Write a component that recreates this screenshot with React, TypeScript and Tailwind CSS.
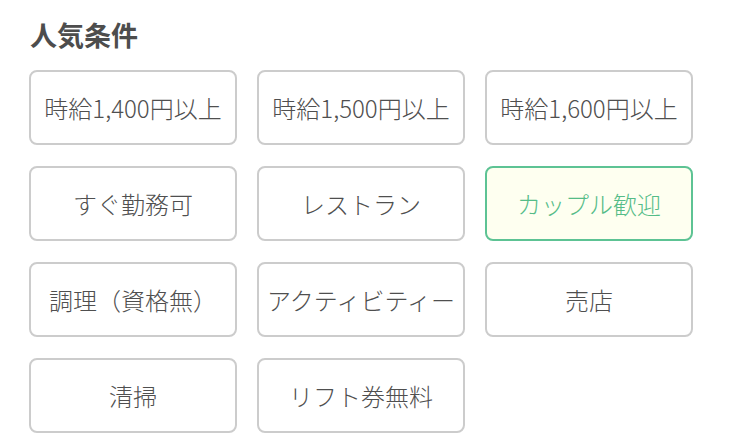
import React from "react";

const items: { label: string; active?: boolean }[] = [
  { label: "時給1,400円以上" },
  { label: "時給1,500円以上" },
  { label: "時給1,600円以上" },
  { label: "すぐ勤務可" },
  { label: "レストラン" },
  { label: "カップル歓迎", active: true },
  { label: "調理（資格無）" },
  { label: "アクティビティー" },
  { label: "売店" },
  { label: "清掃" },
  { label: "リフト券無料" },
];

export default function App() {
  return (
    <div
      className="w-[732px] h-[446px] bg-white pl-[29px] pt-[18px] overflow-hidden"
      style={{ fontFamily: '"Noto Sans CJK JP", "Noto Sans", sans-serif' }}
    >
      <h2 className="text-[27px] font-bold leading-[34px] text-[#4d4d4d] ml-[1px]">人気条件</h2>
      <div className="mt-[18px] grid grid-cols-[208px_208px_208px] gap-x-5 gap-y-[21px]">
        {items.map((it) => (
          <div
            key={it.label}
            className={
              it.active
                ? "h-[75px] rounded-lg border-2 border-[#5dc394] bg-[#fefff0] text-[#55bc88] flex items-center justify-center text-[24px] font-light whitespace-nowrap"
                : "h-[75px] rounded-lg border-2 border-[#cccccc] bg-white text-[#4f4f4f] flex items-center justify-center text-[24px] font-light whitespace-nowrap"
            }
          >
            {it.label}
          </div>
        ))}
      </div>
    </div>
  );
}
